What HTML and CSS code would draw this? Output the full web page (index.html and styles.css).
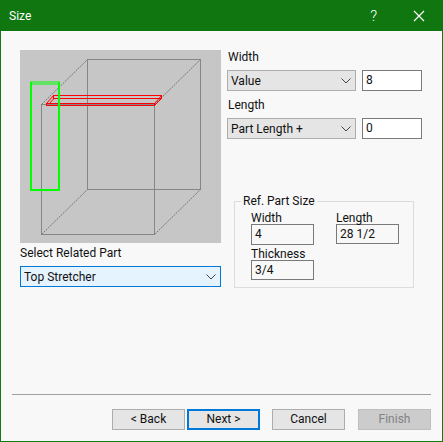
FILE: index.html
```html
<!DOCTYPE html>
<html lang="en">
<head>
    <meta charset="UTF-8">
    <meta name="viewport" content="width=device-width, initial-scale=1.0">
    <title>Size</title>
    <link rel="stylesheet" href="styles.css">
</head>
<body>
    <div class="dialog">
        <header class="titlebar">
            <span class="title">Size</span>
            <span class="help">?</span>
            <svg class="close" width="12" height="12" viewBox="0 0 12 12">
                <path d="M1 1 L11 11 M11 1 L1 11" stroke="#fff" stroke-width="1.2" fill="none"/>
            </svg>
        </header>

        <div class="content">
            <div class="left">
                <svg class="preview" width="201" height="193" viewBox="0 0 201 193">
                    <!-- cabinet box -->
                    <g fill="none" stroke="#868686" stroke-width="1">
                        <rect x="67.5" y="9.5" width="113" height="130"/>
                        <rect x="21.5" y="54.5" width="113" height="130"/>
                    </g>
                    <g stroke="#777" stroke-width="1" stroke-dasharray="2 1" fill="none">
                        <path d="M21.5 54.5 L67.5 9.5"/>
                        <path d="M134.5 54.5 L180.5 9.5"/>
                        <path d="M21.5 184.5 L67.5 139.5"/>
                        <path d="M134.5 184.5 L180.5 139.5"/>
                    </g>
                    <!-- top stretcher -->
                    <g fill="none" stroke="#f00" stroke-width="1">
                        <rect x="33.5" y="45.5" width="108" height="3"/>
                        <rect x="26.5" y="53.5" width="108" height="2"/>
                        <path d="M26.5 53.5 L33.5 45.5 M29 54 L34 48.5 M134.5 53.5 L141.5 45.5 M134.5 55.5 L141.5 48.5"/>
                    </g>
                    <!-- selected part -->
                    <g fill="none" stroke="#0f0">
                        <path d="M10 32 H40 M10 34 H40" stroke-width="1"/>
                        <path d="M11 32 V140 H39 V32" stroke-width="2"/>
                    </g>
                </svg>
                <div class="related-label">Select Related Part</div>
                <div class="combo combo-focus">
                    <span>Top Stretcher</span>
                    <svg width="10" height="6" viewBox="0 0 10 6"><path d="M0.5 0.5 L5 5 L9.5 0.5" stroke="#444" fill="none"/></svg>
                </div>
            </div>

            <div class="right">
                <div class="field-label">Width</div>
                <div class="field-row">
                    <div class="combo">
                        <span>Value</span>
                        <svg width="10" height="6" viewBox="0 0 10 6"><path d="M0.5 0.5 L5 5 L9.5 0.5" stroke="#444" fill="none"/></svg>
                    </div>
                    <div class="textbox">8</div>
                </div>
                <div class="field-label">Length</div>
                <div class="field-row">
                    <div class="combo">
                        <span>Part Length +</span>
                        <svg width="10" height="6" viewBox="0 0 10 6"><path d="M0.5 0.5 L5 5 L9.5 0.5" stroke="#444" fill="none"/></svg>
                    </div>
                    <div class="textbox">0</div>
                </div>

                <fieldset class="ref-group">
                    <legend>Ref. Part Size</legend>
                    <div class="ref-grid">
                        <div>
                            <div class="ref-label">Width</div>
                            <div class="textbox ref-box">4</div>
                        </div>
                        <div>
                            <div class="ref-label">Length</div>
                            <div class="textbox ref-box short">28 1/2</div>
                        </div>
                        <div>
                            <div class="ref-label">Thickness</div>
                            <div class="textbox ref-box short">3/4</div>
                        </div>
                    </div>
                </fieldset>
            </div>
        </div>

        <footer class="footer">
            <div class="separator"></div>
            <div class="buttons">
                <div class="btn">&lt; Back</div>
                <div class="btn btn-default">Next &gt;</div>
                <div class="btn btn-cancel">Cancel</div>
                <div class="btn btn-disabled">Finish</div>
            </div>
        </footer>
    </div>
</body>
</html>
```

FILE: styles.css
```css
* {
    box-sizing: border-box;
}

html, body {
    margin: 0;
    padding: 0;
}

body {
    font-family: Roboto, "Open Sans", sans-serif;
    font-size: 12px;
    color: #111;
}

.dialog {
    width: 443px;
    height: 442px;
    display: flex;
    flex-direction: column;
    background: #f8f8f8;
    border: 1px solid #107c10;
    border-top: none;
}

.titlebar {
    height: 31px;
    margin: 0 -1px;
    flex: none;
    display: flex;
    align-items: center;
    background: #107710;
    color: #fff;
}

.title {
    margin-left: 9px;
    flex: 1;
}

.help {
    font-size: 15px;
    font-weight: 300;
    margin-right: 36px;
}

.close {
    margin-right: 18px;
}

.content {
    display: flex;
    padding: 19px 0 0 19px;
    gap: 6px;
}

.left {
    width: 201px;
}

.preview {
    display: block;
    background: #c6c6c6;
}

.related-label {
    height: 23px;
    line-height: 21px;
}

.combo {
    height: 21px;
    display: flex;
    align-items: center;
    justify-content: space-between;
    padding: 0 4px 0 3px;
    background: #e5e5e5;
    border: 1px solid #adadad;
    white-space: nowrap;
}

.combo-focus {
    background: #e5f3ff;
    border-color: #0078d7;
}

.right {
    width: 195px;
}

.field-label {
    height: 20px;
    line-height: 15px;
    padding-left: 1px;
}

.field-row {
    display: flex;
    gap: 6px;
    margin-bottom: 7px;
}

.field-row .combo {
    width: 129px;
}

.field-row .textbox {
    width: 60px;
}

.textbox {
    height: 21px;
    line-height: 18px;
    padding: 0 3px;
    background: #fff;
    border: 1px solid #7a7a7a;
}

.ref-group {
    width: 180px;
    height: 94px;
    margin: 55px 0 0 7px;
    padding: 0 0 0 16px;
    border: 1px solid #dcdcdc;
}

.ref-group legend {
    margin-left: -10px;
    padding: 0 2px;
    line-height: 15px;
}

.ref-grid {
    display: grid;
    grid-template-columns: 63px 63px;
    column-gap: 22px;
}

.ref-label {
    height: 15px;
    line-height: 18px;
}

.ref-box {
    background: #f8f8f8;
}

.ref-box.short {
    height: 20px;
}

.footer {
    margin-top: auto;
    padding: 0 11px 11px;
}

.separator {
    height: 1px;
    background: #a0a0a0;
    margin-bottom: 14px;
}

.buttons {
    display: flex;
    justify-content: flex-end;
}

.btn {
    width: 73px;
    height: 21px;
    margin-left: 2px;
    line-height: 19px;
    text-align: center;
    background: #e5e5e5;
    border: 1px solid #adadad;
}

.btn-default {
    border: 2px solid #0078d7;
    line-height: 17px;
}

.btn-cancel {
    margin-left: 12px;
}

.btn-disabled {
    margin-left: 13px;
    background: #ccc;
    border-color: #bfbfbf;
    color: #838383;
}
```
